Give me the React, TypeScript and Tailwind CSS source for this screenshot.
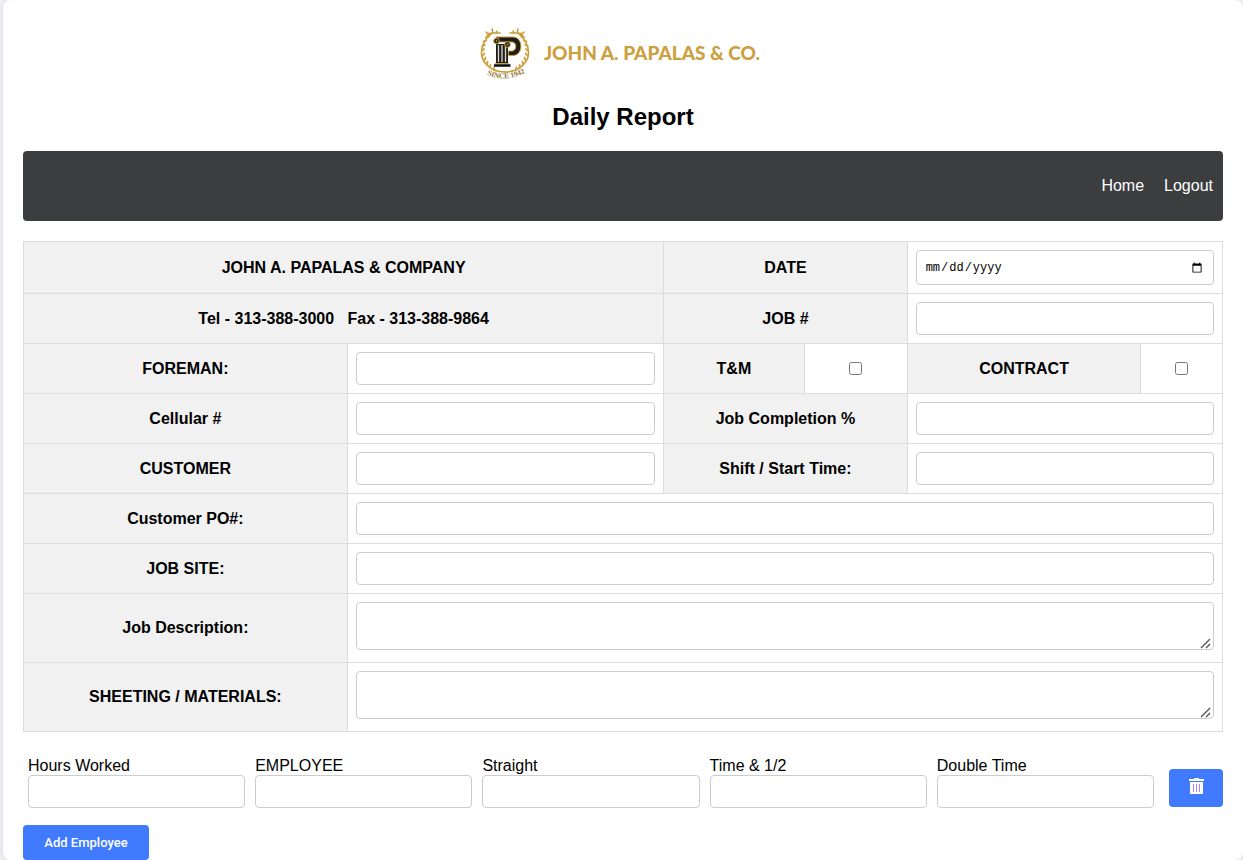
import type { ReactNode } from 'react';

const field = 'block w-full rounded border border-[#ccc] bg-white px-2';
const head = 'border border-[#ddd] bg-[#f1f1f1] p-2 text-center font-bold';
const cell = 'border border-[#ddd] p-2';

function Emblem() {
  const leaves = [42, 54, 66, 78, 90, 102, 114, 126, 138, 150];
  return (
    <svg viewBox="0 0 50 52" className="h-13 w-[50px] overflow-visible" role="img" aria-label="Since 1942">
      <g fill="none" stroke="#c59a34" strokeWidth="1.5" strokeLinecap="round">
        <path d="M10 8 C0 17 -1 30 6 37 C11 43 17 45 25 45" />
        <path d="M40 8 C50 17 51 30 44 37 C39 43 33 45 25 45" />
        <path d="M7 9 L12 6 L20 6 M12 2 L13 6 M17 4 L16 6 M6 5 L9 8" />
        <path d="M43 9 L38 6 L30 6 M38 2 L37 6 M33 4 L34 6 M44 5 L41 8" />
      </g>
      <g fill="#d0a545">
        {leaves.map((a) => (
          <g key={a}>
            <ellipse cx="25" cy="1" rx="1.1" ry="2.5" transform={`rotate(${a} 25 23) rotate(40 25 1)`} />
            <ellipse cx="25" cy="1" rx="1.1" ry="2.5" transform={`rotate(${-a} 25 23) rotate(-40 25 1)`} />
          </g>
        ))}
      </g>
      <path
        d="M16 10 H33 C43.500 10 43.500 28.500 33 28.500 H28.500 V24 H32 C37 24 37 15 32 15 H16 Z"
        fill="#211d17"
        stroke="#c9a03c"
        strokeWidth="1"
      />
      <path d="M16 17 H28 V37 H16 Z" fill="#211d17" />
      <path d="M18.500 18 V35 M22 18 V35 M25.500 18 V35" stroke="#d9d9d9" strokeWidth="1.3" />
      <path d="M15 36.500 H29" stroke="#c9a03c" strokeWidth="1" />
      <path d="M14 38.500 H30.500" stroke="#15120e" strokeWidth="2.600" />
      <circle cx="16.500" cy="14" r="2.800" fill="#211d17" stroke="#c9a03c" />
      <circle cx="16.500" cy="14" r="0.800" fill="#e3c264" />
      <circle cx="27.500" cy="17.500" r="2.800" fill="#211d17" stroke="#c9a03c" />
      <circle cx="27.500" cy="17.500" r="0.800" fill="#e3c264" />
      <path id="since" d="M4 46 Q25 58 48 44" fill="none" />
      <text fontFamily="Liberation Serif, serif" fontSize="7.500" fontWeight="bold" fill="#8f7430">
        <textPath href="#since" startOffset="50%" textAnchor="middle">SINCE 1942</textPath>
      </text>
    </svg>
  );
}

function Trash() {
  return (
    <svg viewBox="0 0 15 16" className="mx-auto h-4 w-[15px]" aria-hidden="true">
      <path d="M0 1 H5 V0 H10 V1 H15 V3 H0 Z M1 4 H14 V16 H1 Z" fill="#fff" />
      <path d="M4.500 6 V14 M7.500 6 V14 M10.500 6 V14" stroke="#b083f5" strokeWidth="1" />
    </svg>
  );
}

function Head({ id, span, children }: { id?: string; span?: number; children: ReactNode }) {
  return (
    <th className={head} colSpan={span}>
      {id ? <label htmlFor={id}>{children}</label> : children}
    </th>
  );
}

function TextCell({ id, span }: { id: string; span?: number }) {
  return (
    <td className={cell} colSpan={span}>
      <input id={id} type="text" className={`${field} h-[33px] text-[13px]`} />
    </td>
  );
}

function CheckCell({ id }: { id: string }) {
  return (
    <td className={cell}>
      <input id={id} type="checkbox" className="mx-auto block h-[13px] w-[13px]" />
    </td>
  );
}

function AreaRow({ id, children }: { id: string; children: ReactNode }) {
  return (
    <tr>
      <Head id={id}>{children}</Head>
      <td className="border border-[#ddd] px-2 pt-2 pb-3" colSpan={5}>
        <div className="relative">
          <textarea id={id} className={`${field} h-12 resize-y py-2 text-[13px] [&::-webkit-resizer]:bg-transparent`} />
          <svg viewBox="0 0 12 12" className="pointer-events-none absolute right-0.5 bottom-px h-3 w-3" aria-hidden="true">
            <path d="M1 11 L10 2 M6 11 L10 7" stroke="#555" strokeWidth="1.400" />
          </svg>
        </div>
      </td>
    </tr>
  );
}

const hours = [
  ['hours', 'Hours Worked'],
  ['employee', 'EMPLOYEE'],
  ['straight', 'Straight'],
  ['half', 'Time & 1/2'],
  ['double', 'Double Time'],
];

export default function App() {
  return (
    <div className="min-h-screen bg-[#f0f2f5] pl-[3px] font-['Liberation_Sans',Arial,sans-serif] text-base text-black">
      <main className="min-h-screen rounded-lg bg-white px-5 pt-[27px] shadow-[0_0_10px_rgba(0,0,0,0.1)]">
        <header className="flex flex-col items-center">
          <div className="flex items-center gap-3.5 pr-1.5">
            <Emblem />
            <span className="font-['Lato',sans-serif] text-[19px] leading-6 font-black text-[#cda03f]">JOHN A. PAPALAS &amp; CO.</span>
          </div>
          <h1 className="mt-6 text-2xl leading-7 font-bold">Daily Report</h1>
        </header>
        <nav className="mt-5 flex h-[70px] items-center justify-end gap-5 rounded bg-[#3c3d3f] px-2.5 text-white">
          <a href="#home">Home</a>
          <a href="#logout">Logout</a>
        </nav>

        <form>
          <table className="mt-5 w-full table-fixed border-collapse leading-5">
            <colgroup>
              <col className="w-[27%]" />
              <col className="w-[26.4%]" />
              <col className="w-[11.7%]" />
              <col className="w-[8.6%]" />
              <col className="w-[19.5%]" />
              <col className="w-[6.8%]" />
            </colgroup>
            <tbody>
              <tr>
                <Head span={2}>JOHN A. PAPALAS &amp; COMPANY</Head>
                <Head span={2} id="date">DATE</Head>
                <td className={cell} colSpan={2}>
                  <input id="date" type="date" className={`${field} h-[35px] font-['Liberation_Mono',monospace] text-xs`} />
                </td>
              </tr>
              <tr>
                <Head span={2}>Tel - 313-388-3000 &nbsp; Fax - 313-388-9864</Head>
                <Head span={2} id="job">JOB #</Head>
                <TextCell id="job" span={2} />
              </tr>
              <tr>
                <Head id="foreman">FOREMAN:</Head>
                <TextCell id="foreman" />
                <Head id="tm">T&amp;M</Head>
                <CheckCell id="tm" />
                <Head id="contract">CONTRACT</Head>
                <CheckCell id="contract" />
              </tr>
              <tr>
                <Head id="cell">Cellular #</Head>
                <TextCell id="cell" />
                <Head span={2} id="completion">Job Completion %</Head>
                <TextCell id="completion" span={2} />
              </tr>
              <tr>
                <Head id="customer">CUSTOMER</Head>
                <TextCell id="customer" />
                <Head span={2} id="shift">Shift / Start Time:</Head>
                <TextCell id="shift" span={2} />
              </tr>
              <tr>
                <Head id="po">Customer PO#:</Head>
                <TextCell id="po" span={5} />
              </tr>
              <tr>
                <Head id="site">JOB SITE:</Head>
                <TextCell id="site" span={5} />
              </tr>
              <AreaRow id="description">Job Description:</AreaRow>
              <AreaRow id="materials">SHEETING / MATERIALS:</AreaRow>
            </tbody>
          </table>

          <div className="mt-6 flex items-end">
            <div className="grid flex-1 grid-cols-5 gap-2.5 px-[5px]">
              {hours.map(([id, label]) => (
                <div key={id}>
                  <label htmlFor={id} className="block leading-[19px]">{label}</label>
                  <input id={id} type="text" className={`${field} h-[33px] text-[13px]`} />
                </div>
              ))}
            </div>
            <button type="button" aria-label="Delete employee" className="mb-px ml-2.5 h-[38px] w-[54px] rounded bg-[#407bff] pb-1">
              <Trash />
            </button>
          </div>
          <button type="button" className="mt-[17px] block h-[35px] w-[126px] rounded bg-[#407bff] font-['Roboto',sans-serif] text-[13px] font-medium text-white">
            Add Employee
          </button>
        </form>
      </main>
    </div>
  );
}
